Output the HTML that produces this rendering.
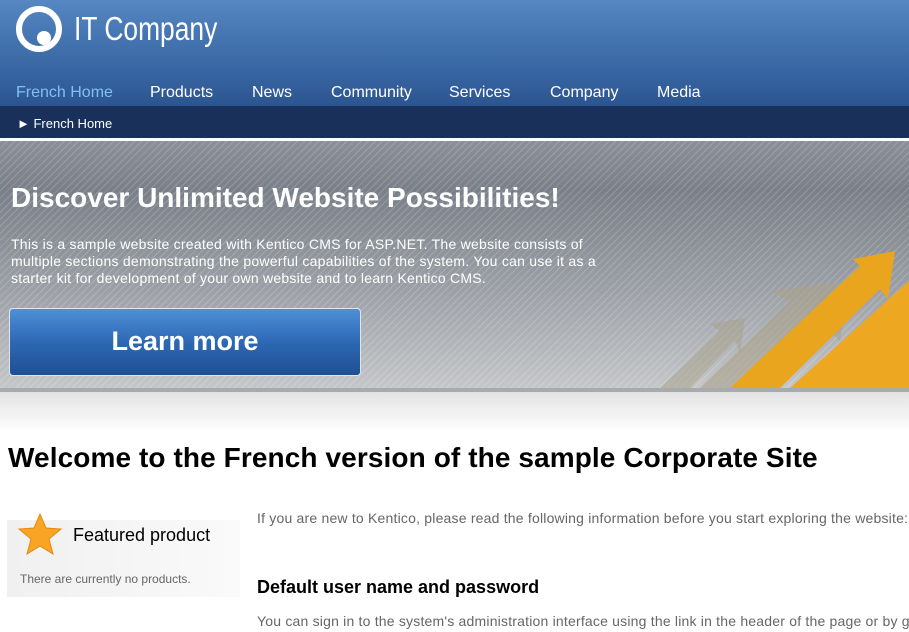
<!DOCTYPE html>
<html><head><meta charset="utf-8"><style>
body{margin:0;width:909px;height:632px;overflow:hidden;font-family:"Liberation Sans",sans-serif;background:#fff;position:relative}
.hdr{position:absolute;left:0;top:0;width:909px;height:106px;background:linear-gradient(#5687c2,#3a69a6 60%,#2c5590)}
.logo{position:absolute;color:#fff;font-size:33px;transform:scaleX(.8);transform-origin:0 0}
.nav{position:absolute;top:84px;font-size:16px;color:#fff}
.bc{position:absolute;left:0;top:106px;width:909px;height:32px;background:#19305a;color:#fff;font-size:13px}
.ban{position:absolute;left:0;top:141px;width:909px;height:247px;background:linear-gradient(#8a9098,#7a8089 20%,#9ca0a6 60%,#c4c6c8);overflow:hidden}
.ban:before{content:"";position:absolute;inset:0;background:repeating-linear-gradient(135deg,rgba(255,255,255,.18) 0 1px,transparent 1px 5px)}
.bar{position:absolute;left:0;top:388px;width:909px;height:4px;background:#a8abae}
.fade{position:absolute;left:0;top:392px;width:909px;height:40px;background:linear-gradient(#e2e2e2,#fff)}
h1{position:absolute;left:11px;top:182px;margin:0;color:#fff;font-size:28px}
.p{position:absolute;left:11px;top:236px;color:#fff;font-size:14px;line-height:17px;width:640px;letter-spacing:.25px}
.btn{position:absolute;left:9px;top:308px;width:350px;height:66px;border-radius:4px;border:1px solid #dfe6ef;background:linear-gradient(#4f8fd8,#2d68b4 50%,#1f4f93);color:#fff;font-weight:bold;font-size:27px;text-align:center;line-height:64px}
h2{position:absolute;left:8px;top:442px;margin:0;font-size:28px;color:#000;letter-spacing:.1px}
.fp{position:absolute;left:7px;top:520px;width:233px;height:77px;background:linear-gradient(90deg,#f0f0f0,#fafafa)}
</style></head><body>
<div class="hdr">
<svg style="position:absolute;left:15px;top:5px" width="48" height="48"><circle cx="24" cy="24" r="20" fill="none" stroke="#fff" stroke-width="6"/><circle cx="29" cy="33" r="7" fill="#fff"/></svg>
<div class="logo" style="left:74px;top:10px">IT Company</div>
<div class="nav" style="left:16px;color:#7fc0f0">French Home</div>
<div class="nav" style="left:150px">Products</div>
<div class="nav" style="left:252px">News</div>
<div class="nav" style="left:331px">Community</div>
<div class="nav" style="left:449px">Services</div>
<div class="nav" style="left:550px">Company</div>
<div class="nav" style="left:657px">Media</div>
</div>
<div class="bc"><span style="position:absolute;left:17px;top:10px">► French Home</span></div>
<div class="ban">
<svg style="position:absolute;left:0;top:0" width="909" height="247">
<polygon points="660,247 720,190 710,183 745,177 740,212 735,200 690,247" fill="#a89f88" opacity=".5"/>
<polygon points="700,247 790,160 770,150 850,140 840,200 820,180 740,247" fill="#aaa18a" opacity=".6"/>
<polygon points="730,247 860,125 853,118 895,110 888,158 880,148 780,247" fill="#e9a51d"/>
<polygon points="790,247 909,140 909,247" fill="#eda721"/>
</svg>
</div>
<h1>Discover Unlimited Website Possibilities!</h1>
<div class="p">This is a sample website created with Kentico CMS for ASP.NET. The website consists of<br>multiple sections demonstrating the powerful capabilities of the system. You can use it as a<br>starter kit for development of your own website and to learn Kentico CMS.</div>
<div class="btn">Learn more</div>
<div class="bar"></div><div class="fade"></div>
<h2>Welcome to the French version of the sample Corporate Site</h2>
<div class="fp">
<svg style="position:absolute;left:10px;top:-8px" width="46" height="44" viewBox="0 0 46 44"><polygon points="23,2 29,16 44,17 32,27 36,42 23,34 10,42 14,27 2,17 17,16" fill="#f9a424" stroke="#e48a10"/></svg>
<div style="position:absolute;left:66px;top:5px;font-size:18px">Featured product</div>
<div style="position:absolute;left:13px;top:52px;font-size:12px;color:#666">There are currently no products.</div>
</div>
<div style="position:absolute;left:257px;top:510px;font-size:14px;color:#666;white-space:nowrap;letter-spacing:.2px">If you are new to Kentico, please read the following information before you start exploring the website:</div>
<div style="position:absolute;left:257px;top:577px;font-size:18px;font-weight:bold">Default user name and password</div>
<div style="position:absolute;left:257px;top:613px;font-size:14px;color:#666;white-space:nowrap;letter-spacing:.2px">You can sign in to the system's administration interface using the link in the header of the page or by g</div>
</body></html>
